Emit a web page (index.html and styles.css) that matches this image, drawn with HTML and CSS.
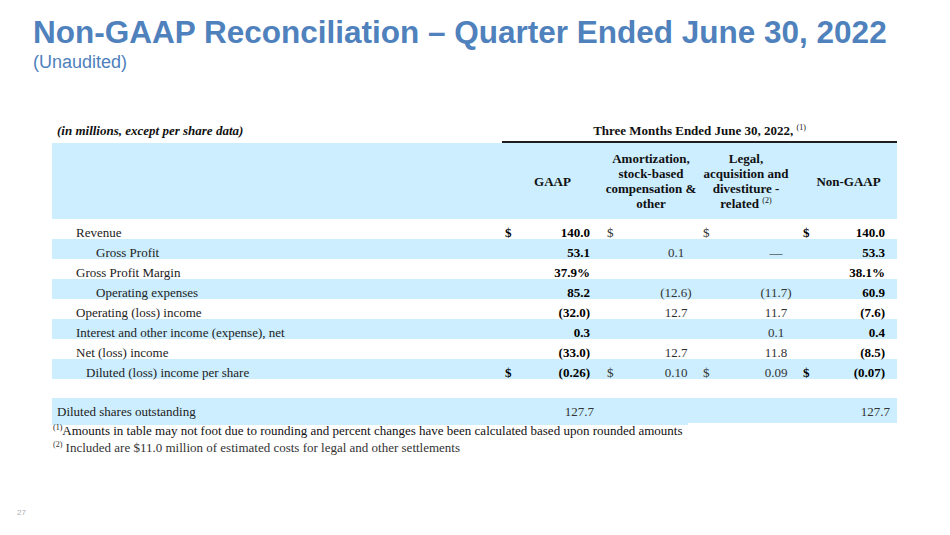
FILE: index.html
```html
<!DOCTYPE html>
<html lang="en">
<head>
<meta charset="utf-8">
<title>Non-GAAP Reconciliation</title>
<link rel="stylesheet" href="styles.css">
</head>
<body>
<main class="slide">
  <header class="title-block">
    <h1 class="title">Non-GAAP Reconciliation – Quarter Ended June 30, 2022</h1>
    <p class="subtitle">(Unaudited)</p>
  </header>

  <table class="recon">
    <colgroup>
      <col class="w-a"><col class="w-b"><col class="w-c"><col class="w-d"><col class="w-e"><col class="w-f"><col class="w-g"><col class="w-h"><col class="w-i">
    </colgroup>
    <thead>
      <tr class="top">
        <th class="units">(in millions, except per share data)</th>
        <th class="period" colspan="8">Three Months Ended June 30, 2022, <sup>(1)</sup></th>
      </tr>
      <tr class="band">
        <th class="blank"></th>
        <th class="col col-gaap" colspan="2">GAAP</th>
        <th class="col col-amort" colspan="2">Amortization,<br>stock-based<br>compensation &amp;<br>other</th>
        <th class="col col-legal" colspan="2">Legal,<br>acquisition and<br>divestiture -<br>related <sup>(2)</sup></th>
        <th class="col col-non" colspan="2">Non-GAAP</th>
      </tr>
    </thead>
    <tbody>
      <tr>
        <td class="lbl in1">Revenue</td>
        <td class="b">$</td><td class="c">140.0</td>
        <td class="d">$</td><td class="e"></td>
        <td class="f">$</td><td class="g"></td>
        <td class="h">$</td><td class="i">140.0</td>
      </tr>
      <tr class="alt">
        <td class="lbl in2">Gross Profit</td>
        <td class="b"></td><td class="c">53.1</td>
        <td class="d"></td><td class="e">0.1</td>
        <td class="f"></td><td class="g dash">—</td>
        <td class="h"></td><td class="i">53.3</td>
      </tr>
      <tr>
        <td class="lbl in1">Gross Profit Margin</td>
        <td class="b"></td><td class="c">37.9%</td>
        <td class="d"></td><td class="e"></td>
        <td class="f"></td><td class="g"></td>
        <td class="h"></td><td class="i">38.1%</td>
      </tr>
      <tr class="alt">
        <td class="lbl in2">Operating expenses</td>
        <td class="b"></td><td class="c">85.2</td>
        <td class="d"></td><td class="e">(12.6)</td>
        <td class="f"></td><td class="g">(11.7)</td>
        <td class="h"></td><td class="i">60.9</td>
      </tr>
      <tr>
        <td class="lbl in1">Operating (loss) income</td>
        <td class="b"></td><td class="c">(32.0)</td>
        <td class="d"></td><td class="e">12.7</td>
        <td class="f"></td><td class="g">11.7</td>
        <td class="h"></td><td class="i">(7.6)</td>
      </tr>
      <tr class="alt">
        <td class="lbl in1">Interest and other income (expense), net</td>
        <td class="b"></td><td class="c">0.3</td>
        <td class="d"></td><td class="e"></td>
        <td class="f"></td><td class="g">0.1</td>
        <td class="h"></td><td class="i">0.4</td>
      </tr>
      <tr>
        <td class="lbl in1">Net (loss) income</td>
        <td class="b"></td><td class="c">(33.0)</td>
        <td class="d"></td><td class="e">12.7</td>
        <td class="f"></td><td class="g">11.8</td>
        <td class="h"></td><td class="i">(8.5)</td>
      </tr>
      <tr class="alt">
        <td class="lbl in15">Diluted (loss) income per share</td>
        <td class="b">$</td><td class="c">(0.26)</td>
        <td class="d">$</td><td class="e">0.10</td>
        <td class="f">$</td><td class="g">0.09</td>
        <td class="h">$</td><td class="i">(0.07)</td>
      </tr>
      <tr class="gap"><td colspan="9"></td></tr>
      <tr class="alt shares">
        <td class="lbl in0">Diluted shares outstanding</td>
        <td class="b"></td><td class="c">127.7</td>
        <td class="d"></td><td class="e"></td>
        <td class="f"></td><td class="g"></td>
        <td class="h"></td><td class="i">127.7</td>
      </tr>
    </tbody>
  </table>

  <div class="notes">
    <p class="note note1"><sup>(1)</sup>Amounts in table may not foot due to rounding and percent changes have been calculated based upon rounded amounts</p>
    <p class="note note2"><sup>(2)</sup> Included are $11.0 million of estimated costs for legal and other settlements</p>
  </div>

  <div class="page-num">27</div>
</main>
</body>
</html>
```

FILE: styles.css
```css
* { box-sizing: border-box; }

html, body {
  margin: 0;
  padding: 0;
}

body {
  width: 950px;
  height: 535px;
  background: #ffffff;
  overflow: hidden;
}

.slide {
  display: flex;
  flex-direction: column;
  height: 535px;
}

/* ---------- Title ---------- */
.title-block {
  padding: 14px 0 0 33px;
  color: #4f81bd;
  font-family: "Liberation Sans", Arial, sans-serif;
}

.title {
  margin: 0;
  font-size: 31.5px;
  font-weight: 700;
  line-height: 36px;
}

.subtitle {
  margin: 2px 0 0;
  font-size: 18px;
  line-height: 21px;
}

/* ---------- Table ---------- */
.recon {
  margin: 48px 0 0 52px;
  width: 845px;
  table-layout: fixed;
  border-collapse: separate;
  border-spacing: 0;
  font-family: "Liberation Serif", "Times New Roman", serif;
  font-size: 13px;
  color: #222222;
}

.w-a { width: 450px; }
.w-b { width: 18px; }
.w-c { width: 75px; }
.w-d { width: 30px; }
.w-e { width: 75px; }
.w-f { width: 20px; }
.w-g { width: 80px; }
.w-h { width: 15px; }
.w-i { width: 82px; }

.recon th,
.recon td {
  padding: 7px 0 0 0;
  line-height: 13px;
  vertical-align: top;
  white-space: nowrap;
  font-weight: 400;
}

.recon sup {
  font-size: 8px;
  line-height: 0;
  vertical-align: 5px;
  font-weight: 400;
}

/* header row with units + period */
.top .units {
  padding: 3px 0 4px 5px;
  text-align: left;
  font-style: italic;
  font-weight: 700;
  color: #111111;
}

.top .period {
  padding: 3px 0 4px;
  text-align: center;
  font-weight: 700;
  color: #111111;
  border-bottom: 2px solid #1e1e1e;
}

/* blue column header band */
.band th {
  background: #cceeff;
}

.band .col {
  padding: 8px 0;
  line-height: 15px;
  vertical-align: middle;
  text-align: center;
  font-weight: 700;
  color: #111111;
}

.band .col-gaap { padding-left: 8px; }
.band .col-amort { padding-left: 7px; }
.band .col-legal { padding-right: 8px; }

/* body rows */
.alt td { background: #cceeff; }

.lbl { text-align: left; }
.in0 { padding-left: 5px !important; }
.in1 { padding-left: 24px !important; }
.in15 { padding-left: 34px !important; }
.in2 { padding-left: 44px !important; }

.b, .c, .h, .i {
  font-weight: 700 !important;
  color: #000000;
}

.b { padding-left: 3px !important; }
.c { text-align: right; padding-right: 5px !important; }
.d { padding-left: 12px !important; color: #333333; }
.e { text-align: center; padding-left: 27px !important; color: #333333; }
.f { padding-left: 3px !important; color: #333333; }
.g { text-align: center; padding-left: 32px !important; color: #333333; }
.g.dash { color: #111111; }
.h { padding-left: 3px !important; }
.i { text-align: right; padding-right: 12px !important; }

.gap td {
  padding: 0;
  height: 19px;
}

.shares td {
  padding-bottom: 5px;
}

.shares .c,
.shares .i {
  font-weight: 400 !important;
  color: #333333;
}

.shares .c { padding-right: 1px !important; }
.shares .i { padding-right: 7px !important; }

/* ---------- Footnotes ---------- */
.notes {
  margin-left: 52px;
  font-family: "Liberation Serif", "Times New Roman", serif;
}

.note {
  margin: 0;
  white-space: nowrap;
}

.note sup {
  font-size: 8px;
  line-height: 0;
  vertical-align: 5px;
}

.note1 {
  width: fit-content;
  padding: 0 5px 0 1px;
  border-top: 2px solid #cceeff;
  font-size: 13px;
  line-height: 12px;
  color: #111111;
}

.note2 {
  margin-top: 3px;
  padding-left: 1px;
  font-size: 13px;
  line-height: 16px;
  color: #333333;
}

/* ---------- Page number ---------- */
.page-num {
  margin-top: auto;
  padding: 0 0 17px 17px;
  font-family: "Liberation Sans", Arial, sans-serif;
  font-size: 8px;
  line-height: 10px;
  color: #b0b0b0;
}
```
